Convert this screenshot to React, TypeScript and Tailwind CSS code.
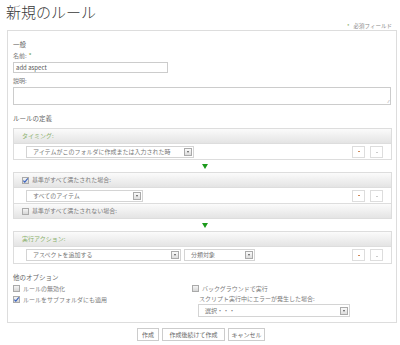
const font = { fontFamily: '"Noto Sans CJK JP", "Noto Sans", sans-serif' };

function Select({ label, width }: { label: string; width: string }) {
  return (
    <div className={`flex h-[12px] items-center justify-between border border-[#d4d4d4] bg-white pl-[6px] pr-[1px] ${width}`}>
      <span className="text-[6px] leading-[8px] text-[#777]">{label}</span>
      <span className="flex h-[8px] w-[8px] items-center justify-center border border-[#aaa] bg-gradient-to-b from-[#fafafa] to-[#ddd]">
        <span className="h-0 w-0 border-x-[1.5px] border-t-[2px] border-x-transparent border-t-[#555]" />
      </span>
    </div>
  );
}

function Checkbox({ checked }: { checked?: boolean }) {
  return (
    <span className="relative inline-block h-[7px] w-[7px] shrink-0 border border-[#aaa] bg-gradient-to-b from-[#f4f4f4] to-[#d6d6d6]">
      {checked && (
        <svg viewBox="0 0 7 7" className="absolute left-[-1px] top-[-1px] h-[7px] w-[7px]">
          <path d="M1.3 3.6 L2.8 5.2 L5.8 1.4" fill="none" stroke="#3a63c0" strokeWidth="1.1" />
        </svg>
      )}
    </span>
  );
}

function RowButtons() {
  return (
    <div className="flex gap-[5px] pr-[8px]">
      <span className="flex h-[12px] w-[13px] items-center justify-center border border-[#ddd] bg-white">
        <span className="h-[1px] w-[2px] bg-[#d08a5a]" />
      </span>
      <span className="flex h-[12px] w-[13px] items-center justify-center border border-[#ddd] bg-white">
        <span className="mt-[2px] h-[1px] w-[2px] bg-[#ccc]" />
      </span>
    </div>
  );
}

function Header({ children }: { children: React.ReactNode }) {
  return (
    <div className="flex h-[15px] items-center gap-[3px] border-b border-[#ddd] bg-gradient-to-b from-[#fbfbfb] to-[#e4e4e4] pl-[8px] text-[6px] leading-[8px]">
      {children}
    </div>
  );
}

function Arrow() {
  return (
    <div className="flex h-[12px] items-center justify-center">
      <span className="h-0 w-0 border-x-[3px] border-t-[5px] border-x-transparent border-t-[#1c9a1c]" />
    </div>
  );
}

export default function App() {
  return (
    <div className="relative h-[345px] w-[400px] overflow-hidden bg-white text-[#7a7a7a]" style={font}>
      <div className="h-[21px] pl-[6px] pt-[2px] text-[15px] font-light leading-[20px] text-[#3a3a3a]">新規のルール</div>
      <div className="flex h-[9px] items-center justify-end gap-[4px] pr-[8px] text-[5.5px] leading-[8px] text-[#888]">
        <span className="text-[#6a9a3a]">*</span>
        <span>必須フィールド</span>
      </div>

      <div className="ml-[7px] h-[293px] w-[390px] border border-[#ddd] pl-[5px] pt-[8px]">
        <div className="h-[10px] text-[6.5px] leading-[10px] text-[#666]">一般</div>
        <div className="mt-[2px] flex h-[10px] gap-[2px] text-[6px] leading-[10px]">
          <span>名前:</span>
          <span className="text-[#6a9a3a]">*</span>
        </div>
        <div className="mt-[1px] flex h-[11px] w-[155px] items-center border border-[#ccc] pl-[2px] text-[6px] leading-[8px] text-[#555]">
          add aspect
        </div>
        <div className="mt-[3px] h-[10px] text-[6px] leading-[10px]">説明:</div>
        <div className="relative mt-[1px] h-[18px] w-[378px] border border-[#ccc]">
          <span className="absolute bottom-[1px] right-[1px] text-[4px] leading-[4px] text-[#aaa]">⁄⁄</span>
        </div>

        <div className="mt-[8px] h-[10px] text-[6.5px] leading-[10px] text-[#666]">ルールの定義</div>

        <div className="mt-[5px] w-[379px] border border-[#ddd]">
          <Header>
            <span className="text-[#8ab06a]">タイミング:</span>
          </Header>
          <div className="flex h-[15px] items-center justify-between pl-[12px]">
            <Select label="アイテムがこのフォルダに作成または入力された時" width="w-[168px]" />
            <RowButtons />
          </div>
        </div>

        <Arrow />

        <div className="w-[379px] border border-[#ddd]">
          <Header>
            <Checkbox checked />
            <span>基準がすべて満たされた場合:</span>
          </Header>
          <div className="flex h-[16px] items-center justify-between border-b border-[#ddd] pl-[12px]">
            <Select label="すべてのアイテム" width="w-[117px]" />
            <RowButtons />
          </div>
          <div className="flex h-[14px] items-center gap-[3px] bg-gradient-to-b from-[#fbfbfb] to-[#e4e4e4] pl-[8px] text-[6px] leading-[8px]">
            <Checkbox />
            <span>基準がすべて満たされない場合:</span>
          </div>
        </div>

        <Arrow />

        <div className="w-[379px] border border-[#ddd]">
          <Header>
            <span className="text-[#8ab06a]">実行アクション:</span>
          </Header>
          <div className="flex h-[16px] items-center justify-between pl-[12px]">
            <div className="flex gap-[3px]">
              <Select label="アスペクトを追加する" width="w-[155px]" />
              <Select label="分類対象" width="w-[71px]" />
            </div>
            <RowButtons />
          </div>
        </div>

        <div className="mt-[8px] h-[10px] text-[6.5px] leading-[10px] text-[#666]">他のオプション</div>
        <div className="mt-[1px] flex">
          <div className="w-[179px]">
            <div className="flex h-[11px] items-center gap-[3px] text-[6px] leading-[8px]">
              <Checkbox />
              <span>ルールの無効化</span>
            </div>
            <div className="flex h-[11px] items-center gap-[3px] text-[6px] leading-[8px]">
              <Checkbox checked />
              <span>ルールをサブフォルダにも適用</span>
            </div>
          </div>
          <div>
            <div className="flex h-[11px] items-center gap-[3px] text-[6px] leading-[8px]">
              <Checkbox />
              <span>バックグラウンドで実行</span>
            </div>
            <div className="flex h-[9px] items-center pl-[7px] text-[6px] leading-[8px]">
              スクリプト実行中にエラーが発生した場合:
            </div>
            <div className="ml-[6px] mt-[1px]">
              <Select label="選択・・・" width="w-[152px] h-[13px]" />
            </div>
          </div>
        </div>
      </div>

      <div className="mt-[5px] flex justify-center gap-[3px] pl-[2px] text-[6px] leading-[8px] text-[#666]">
        <span className="flex h-[13px] w-[22px] items-center justify-center border border-[#ccc]">作成</span>
        <span className="flex h-[13px] w-[63px] items-center justify-center border border-[#ccc]">作成後続けて作成</span>
        <span className="flex h-[13px] w-[37px] items-center justify-center border border-[#ccc]">キャンセル</span>
      </div>
    </div>
  );
}
